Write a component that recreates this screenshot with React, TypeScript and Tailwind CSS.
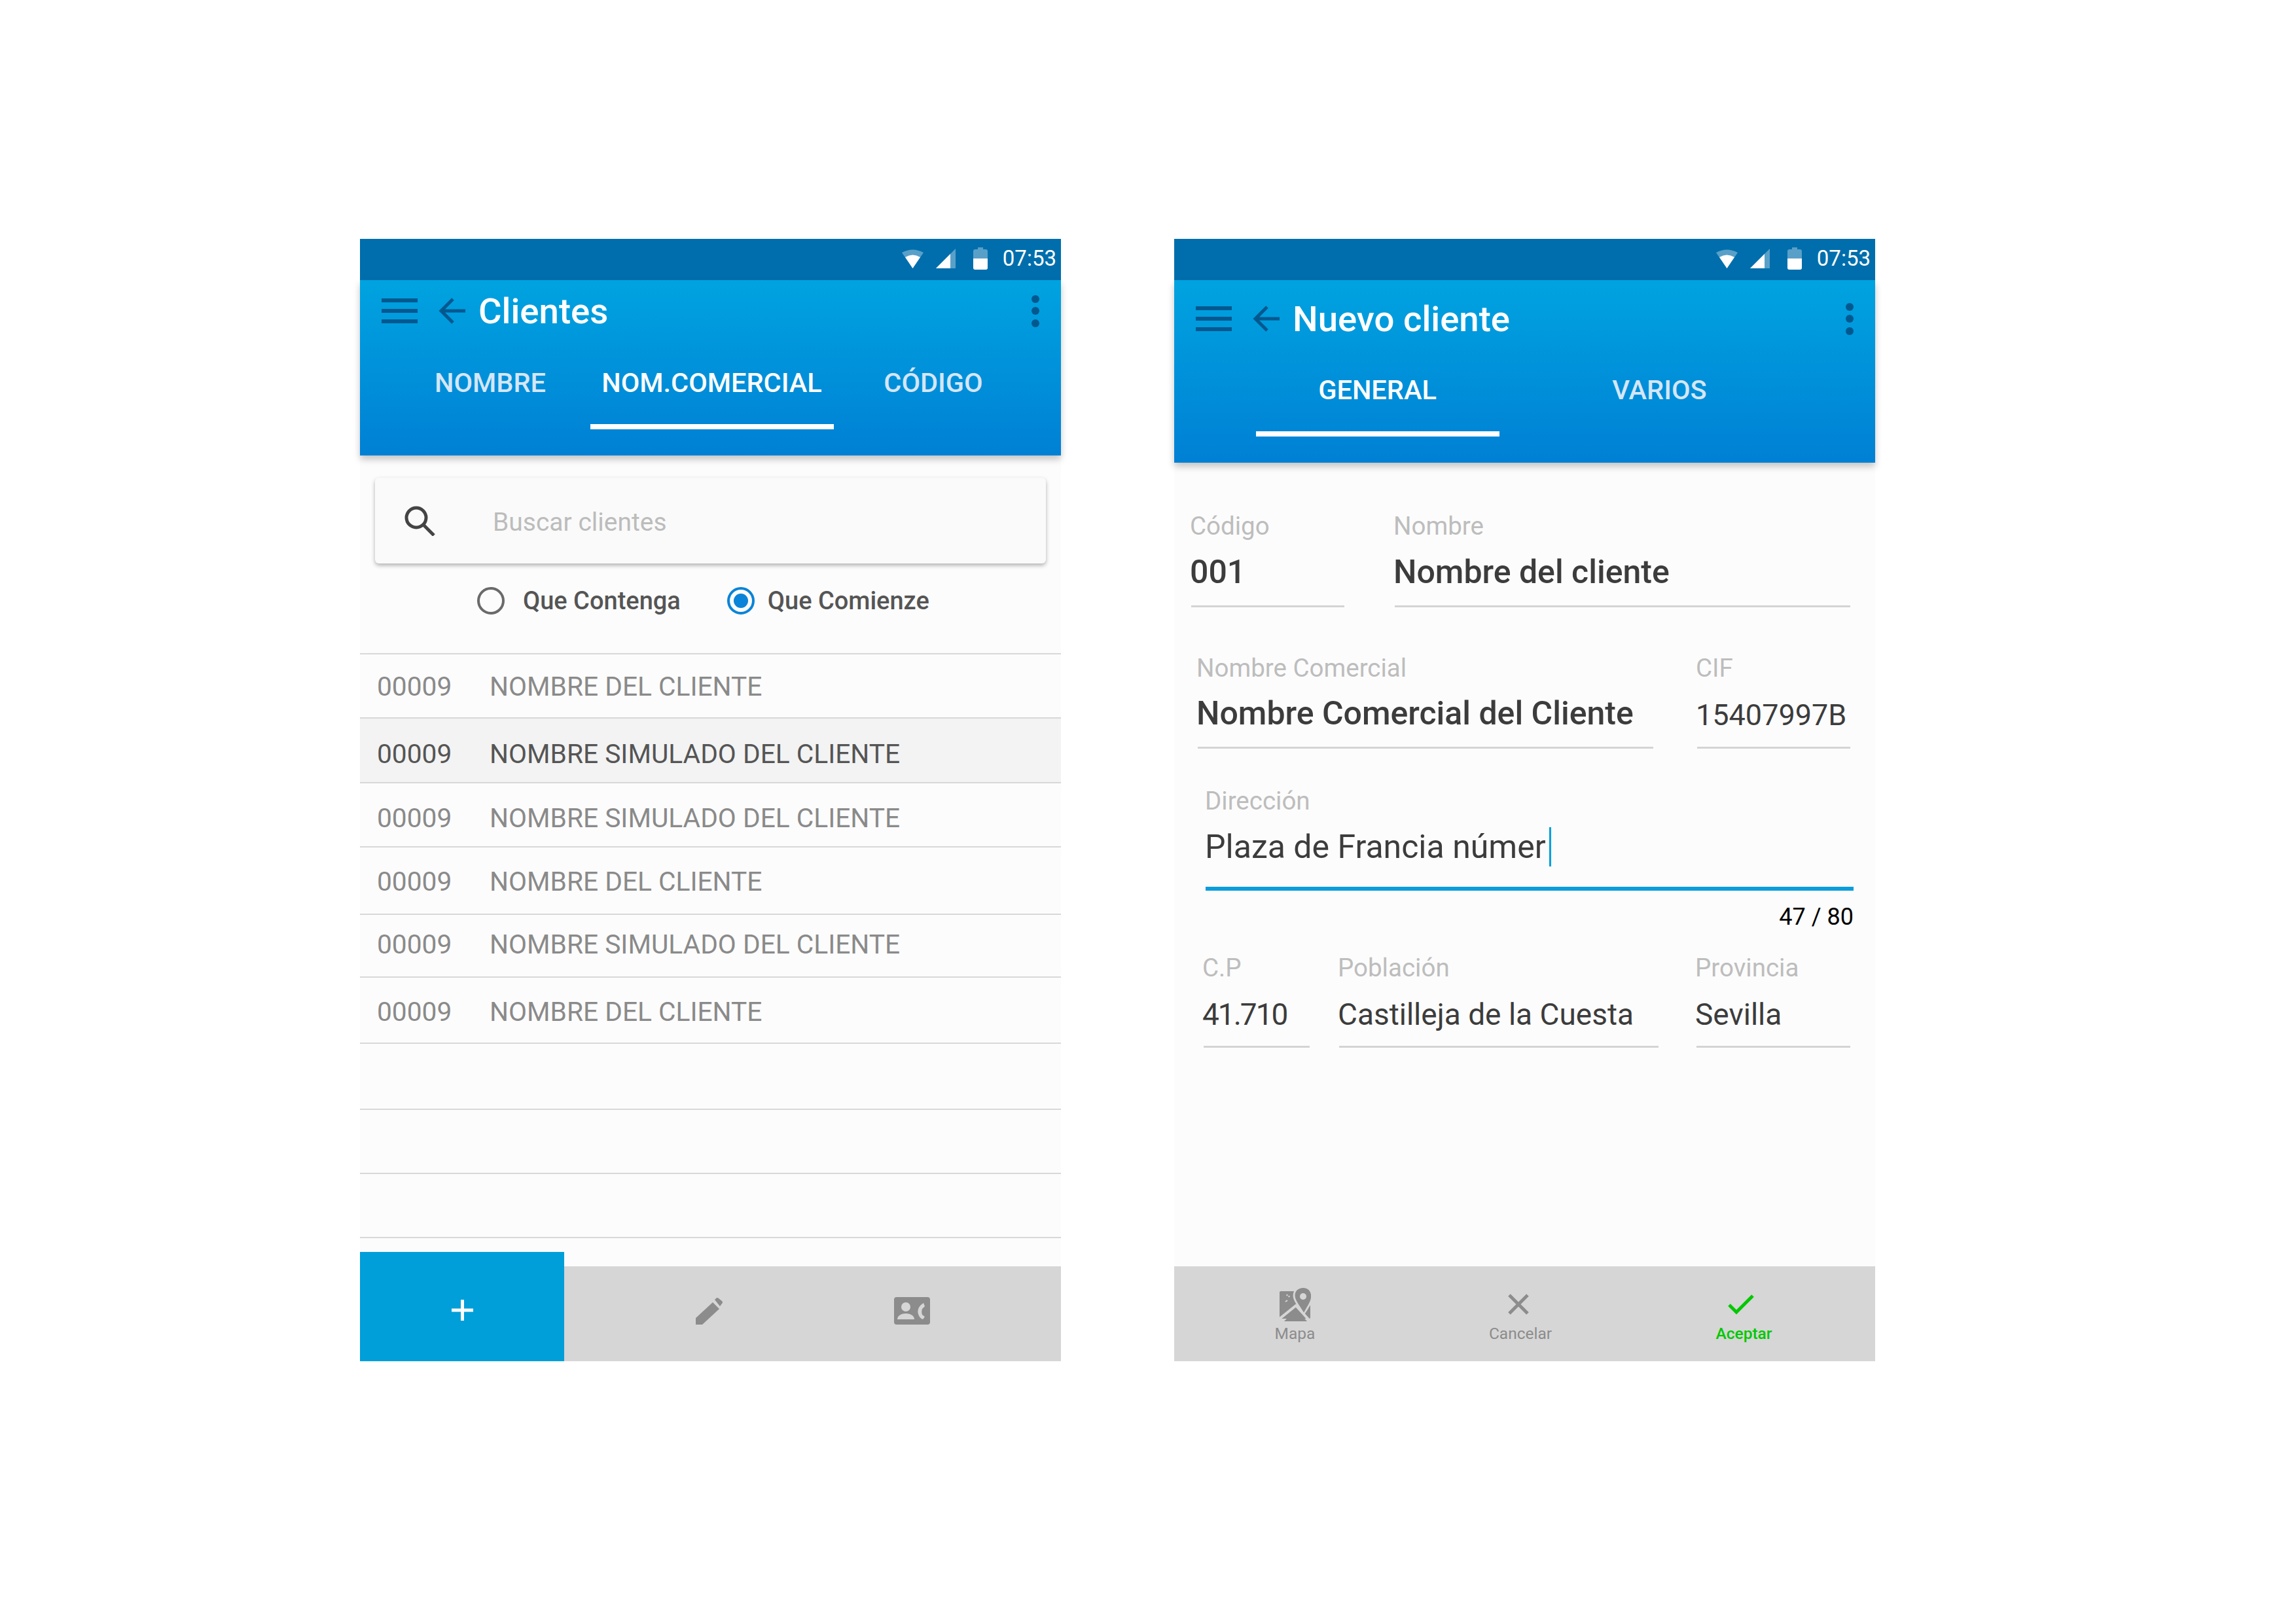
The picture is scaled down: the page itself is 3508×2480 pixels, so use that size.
const Wifi = () => (
  <svg width="33" height="30" viewBox="0 0 33 30" className="mr-[19px]">
    <path d="M0 6 Q16.5 -3 33 6 L16.5 30 Z" fill="#fff" fillOpacity="0.35" />
    <path d="M5 13 Q16.5 6 28 13 L16.5 30 Z" fill="#fff" />
  </svg>
)

const Signal = () => (
  <svg width="30" height="30" viewBox="0 0 30 30" className="mr-[27px]">
    <path d="M30 0 V30 H0 Z" fill="#fff" fillOpacity="0.35" />
    <path d="M22 8 V30 H0 Z" fill="#fff" />
  </svg>
)

const Battery = () => (
  <svg width="22" height="34" viewBox="0 0 22 34" className="mr-[23px]">
    <path
      d="M7 0 H15 V3 H19 Q22 3 22 6 V31 Q22 34 19 34 H3 Q0 34 0 31 V6 Q0 3 3 3 H7 Z"
      fill="#fff"
      fillOpacity="0.35"
    />
    <path d="M0 17 H22 V31 Q22 34 19 34 H3 Q0 34 0 31 Z" fill="#fff" />
  </svg>
)

const StatusBar = () => (
  <div className="h-[63px] bg-[#006eac] flex items-center justify-end pr-[7px] pb-[4px]">
    <Wifi />
    <Signal />
    <Battery />
    <span className="text-[33px] leading-[40px] text-white">07:53</span>
  </div>
)

const Toolbar = ({ title, top }: { title: string; top: string }) => (
  <div className={`flex items-center pl-[33px] pr-[33px] ${top}`}>
    <div className="flex flex-col gap-[10px] w-[55px]">
      <div className="h-[6px] bg-[#00588f]" />
      <div className="h-[6px] bg-[#00588f]" />
      <div className="h-[6px] bg-[#00588f]" />
    </div>
    <svg width="41" height="40" viewBox="0 0 41 40" className="ml-[32px]" fill="none" stroke="#00588f" strokeWidth="5">
      <path d="M41 20 H4 M22 2 L4 20 L22 38" />
    </svg>
    <span className="ml-[20px] text-[54.5px] leading-[64px] font-medium text-white">{title}</span>
    <div className="ml-auto flex flex-col gap-[6.5px]">
      <div className="w-[12px] h-[12px] rounded-full bg-[#00588f]" />
      <div className="w-[12px] h-[12px] rounded-full bg-[#00588f]" />
      <div className="w-[12px] h-[12px] rounded-full bg-[#00588f]" />
    </div>
  </div>
)

const Tab = ({ label, active, width }: { label: string; active?: boolean; width: string }) => (
  <div className={`flex flex-col items-center shrink-0 ${width}`}>
    <span
      className={`text-[41.5px] leading-[48px] font-medium whitespace-nowrap ${
        active ? 'text-white' : 'text-[#d5e6f6]'
      }`}
    >
      {label}
    </span>
    <div className={`mt-[39px] h-[8px] w-[372px] shrink-0 ${active ? 'bg-white' : ''}`} />
  </div>
)

const rows = [
  { id: '00009', name: 'NOMBRE DEL CLIENTE', box: 'h-[98px] pt-[25px]' },
  { id: '00009', name: 'NOMBRE SIMULADO DEL CLIENTE', box: 'h-[99px] pt-[30px] bg-[#f3f3f3]', dark: true },
  { id: '00009', name: 'NOMBRE SIMULADO DEL CLIENTE', box: 'h-[98px] pt-[29px]' },
  { id: '00009', name: 'NOMBRE DEL CLIENTE', box: 'h-[103px] pt-[28px]' },
  { id: '00009', name: 'NOMBRE SIMULADO DEL CLIENTE', box: 'h-[96px] pt-[21px]' },
  { id: '00009', name: 'NOMBRE DEL CLIENTE', box: 'h-[101px] pt-[28px]' },
  { box: 'h-[101px]' },
  { box: 'h-[98px]' },
  { box: 'h-[98px]' }
]

const Radio = ({ label, checked, gap }: { label: string; checked?: boolean; gap: string }) => (
  <div className="flex items-center">
    <div
      className={`w-[42px] h-[42px] rounded-full border-[4px] flex items-center justify-center ${
        checked ? 'border-[#0a84d8]' : 'border-[#6a6a6a]'
      }`}
    >
      {checked && <div className="w-[22px] h-[22px] rounded-full bg-[#0a84d8]" />}
    </div>
    <span className={`text-[38px] leading-[44px] font-medium text-[#555555] ${gap}`}>{label}</span>
  </div>
)

const ClientesBar = () => (
  <div className="flex items-end mt-auto">
    <div className="w-[312px] h-[167px] bg-[#009fd9] flex items-center justify-center pt-[10px]">
      <svg width="33" height="32" viewBox="0 0 33 32" fill="#fff">
        <rect x="14" y="0" width="5" height="32" />
        <rect x="0" y="13.5" width="33" height="5" />
      </svg>
    </div>
    <div className="flex-1 h-[145px] bg-[#d6d6d6] flex items-start pt-[47px]">
      <svg width="42" height="42" viewBox="0 0 42 42" className="ml-[201px]" fill="#8c8c8c">
        <path d="M0 32 L26 8 L36 18 L10 42 H0 Z" />
        <path d="M29 4 L31 2 Q33 0 35 2 L40 6 Q42 8 40 10 L37 14 Z" />
      </svg>
      <svg width="55" height="42" viewBox="0 0 55 42" className="ml-[261px]">
        <rect width="55" height="42" rx="4" fill="#8c8c8c" />
        <circle cx="18" cy="15" r="7" fill="#d6d6d6" />
        <path d="M5 34 C5 28 12 25 18 25 S31 28 31 34 Z" fill="#d6d6d6" />
        <path
          d="M45 9 C38 13 35 20 37 26 C38 30 41 33 44 34 L47 30 L43 27 C42 24 42 21 43 18 L47 14 Z"
          fill="#d6d6d6"
        />
      </svg>
    </div>
  </div>
)

const Clientes = () => (
  <div className="w-[1071px] h-[1715px] flex flex-col bg-[#fcfcfc]">
    <StatusBar />
    <div className="relative z-10 bg-gradient-to-b from-[#00a3e0] to-[#0080d4] shadow-[0_6px_10px_rgba(0,0,0,0.22)]">
      <Toolbar title="Clientes" top="pt-[15px]" />
      <div className="flex mt-[54px] pl-[30px] pb-[40px]">
        <Tab label="NOMBRE" width="w-[338px]" />
        <Tab label="NOM.COMERCIAL" width="w-[339px]" active />
        <Tab label="CÓDIGO" width="w-[338px]" />
      </div>
    </div>

    <div className="mt-[34px] mx-[23px] h-[131px] rounded-[6px] bg-[#fafafa] shadow-[0_3px_6px_rgba(0,0,0,0.3)] flex items-center pl-[45px]">
      <svg width="47" height="46" viewBox="0 0 47 46" fill="none" stroke="#444444" strokeWidth="5">
        <circle cx="18" cy="18" r="15" />
        <path d="M29 29 L45 45" />
      </svg>
      <span className="ml-[88px] mt-[4px] text-[39px] leading-[44px] text-[#bcbcbc]">Buscar clientes</span>
    </div>

    <div className="mt-[35px] pl-[179px] flex gap-[71px]">
      <Radio label="Que Contenga" gap="ml-[28px]" />
      <Radio label="Que Comienze" gap="ml-[20px]" checked />
    </div>

    <div className="mt-[58px]">
      {rows.map((row, i) => (
        <div key={i} className={`border-t-2 border-[#d8d8d8] flex ${row.box}`}>
          {row.name && (
            <div
              className={`flex pl-[26px] text-[40.7px] leading-[48px] ${
                row.dark ? 'text-[#555555]' : 'text-[#8a8a8a]'
              }`}
            >
              <span className="w-[172px]">{row.id}</span>
              <span>{row.name}</span>
            </div>
          )}
        </div>
      ))}
      <div className="border-t-2 border-[#d8d8d8]" />
    </div>

    <ClientesBar />
  </div>
)

const Field = ({
  box,
  label,
  value,
  valueClass = 'text-[50px] font-medium',
  gap = 'mt-[18px]',
  pb = 'pb-[20px]'
}: {
  box: string
  label: string
  value: string
  valueClass?: string
  gap?: string
  pb?: string
}) => (
  <div className={`border-b-[3px] border-[#d4d4d4] ${box} ${pb}`}>
    <div className="-ml-[2px] text-[38.5px] leading-[44px] text-[#bdbdbd] whitespace-nowrap">{label}</div>
    <div className={`-ml-[2px] leading-[60px] text-[#3c3c3c] whitespace-nowrap ${gap} ${valueClass}`}>{value}</div>
  </div>
)

const Action = ({
  label,
  green,
  shift,
  labelShift,
  children
}: {
  label: string
  green?: boolean
  shift?: string
  labelShift?: string
  children: React.ReactNode
}) => (
  <div className="w-[343px] flex flex-col items-center">
    <div className={`h-[52px] flex items-center ${shift ?? ''}`}>{children}</div>
    <span
      className={`mt-[4px] text-[24.5px] leading-[30px] ${labelShift ?? ''} ${
        green ? 'text-[#00c800] font-medium' : 'text-[#8c8c8c]'
      }`}
    >
      {label}
    </span>
  </div>
)

const NuevoCliente = () => (
  <div className="w-[1071px] h-[1715px] flex flex-col bg-[#fcfcfc]">
    <StatusBar />
    <div className="relative z-10 bg-gradient-to-b from-[#00a3e0] to-[#0080d4] shadow-[0_6px_10px_rgba(0,0,0,0.22)]">
      <Toolbar title="Nuevo cliente" top="pt-[27px]" />
      <div className="flex mt-[53px] pl-[95px] pb-[40px]">
        <Tab label="GENERAL" width="w-[431px]" active />
        <Tab label="VARIOS" width="w-[431px]" />
      </div>
    </div>

    <div className="flex mt-[75px] pl-[26px]">
      <Field box="w-[234px]" label="Código" value="001" pb="pb-[21px]" />
      <Field box="w-[696px] ml-[77px]" label="Nombre" value="Nombre del cliente" pb="pb-[21px]" />
    </div>

    <div className="flex mt-[71px] pl-[36px]">
      <Field box="w-[696px]" label="Nombre Comercial" value="Nombre Comercial del Cliente" gap="mt-[17px]" pb="pb-[19px]" />
      <Field
        box="w-[234px] ml-[67px]"
        label="CIF"
        value="15407997B"
        valueClass="text-[45px]"
        gap="mt-[20px]"
        pb="pb-[18px]"
      />
    </div>

    <div className="mt-[58px] ml-[48px] w-[990px]">
      <div className="-ml-[1px] text-[38.5px] leading-[44px] text-[#bdbdbd]">Dirección</div>
      <div className="flex mt-[18px] pb-[31px] border-b-[6px] border-[#0a9ddb]">
        <span className="-ml-[1px] text-[50px] leading-[60px] text-[#3c3c3c]">Plaza de Francia númer</span>
        <span className="ml-[5px] w-[3px] h-[60px] bg-[#00a0dc]" />
      </div>
      <div className="mt-[18px] text-right text-[36px] leading-[44px] text-black">47 / 80</div>
    </div>

    <div className="flex mt-[34px] pl-[45px]">
      <Field box="w-[162px]" label="C.P" value="41.710" valueClass="text-[46px] tracking-[-2px]" gap="mt-[19px]" pb="pb-[18px]" />
      <Field box="w-[488px] ml-[45px]" label="Población" value="Castilleja de la Cuesta" valueClass="text-[46px]" gap="mt-[19px]" pb="pb-[18px]" />
      <Field box="w-[235px] ml-[58px]" label="Provincia" value="Sevilla" valueClass="text-[46px]" gap="mt-[19px]" pb="pb-[18px]" />
    </div>

    <div className="mt-auto h-[145px] bg-[#d6d6d6] flex pt-[32px] pl-[13px]">
      <Action label="Mapa">
        <svg width="48" height="51" viewBox="0 0 48 51">
          <rect x="0" y="5" width="47" height="42" rx="2" fill="#8c8c8c" />
          <path d="M36 -3 C25 -3 19 6 21 15 C23 23 32 34 37 42 C42 34 50 23 52 15 C54 6 47 -3 36 -3 Z" fill="#d6d6d6" />
          <path d="M36 0 C27 0 22 7 24 15 C26 22 33 30 37 38 C41 30 47 22 48 15 C49 7 45 0 36 0 Z" fill="#8c8c8c" />
          <circle cx="36" cy="13" r="5" fill="#d6d6d6" />
          <path d="M-1 48 L25 27 L46 50" fill="none" stroke="#d6d6d6" strokeWidth="4" />
          <path d="M7 51 L25 33 L42 51 Z" fill="#8c8c8c" />
          <path d="M9 21 L12 19 M14 14 L15 12 M11 12 L12 10" stroke="#d6d6d6" strokeWidth="2" />
        </svg>
      </Action>
      <Action label="Cancelar" shift="-ml-[3px]" labelShift="ml-[3px]">
        <svg width="32" height="32" viewBox="0 0 32 32" fill="none" stroke="#8c8c8c" strokeWidth="5">
          <path d="M2 2 L30 30 M30 2 L2 30" />
        </svg>
      </Action>
      <Action label="Aceptar" green shift="-ml-[10px]">
        <svg width="40" height="31" viewBox="0 0 40 31" fill="none" stroke="#00c800" strokeWidth="5">
          <path d="M2 16 L13 27 L38 2" />
        </svg>
      </Action>
    </div>
  </div>
)

export default function App() {
  return (
    <div className="w-[3508px] h-[2480px] bg-white flex gap-[173px] pl-[550px] pt-[365px] font-[Roboto,sans-serif]">
      <Clientes />
      <NuevoCliente />
    </div>
  )
}
